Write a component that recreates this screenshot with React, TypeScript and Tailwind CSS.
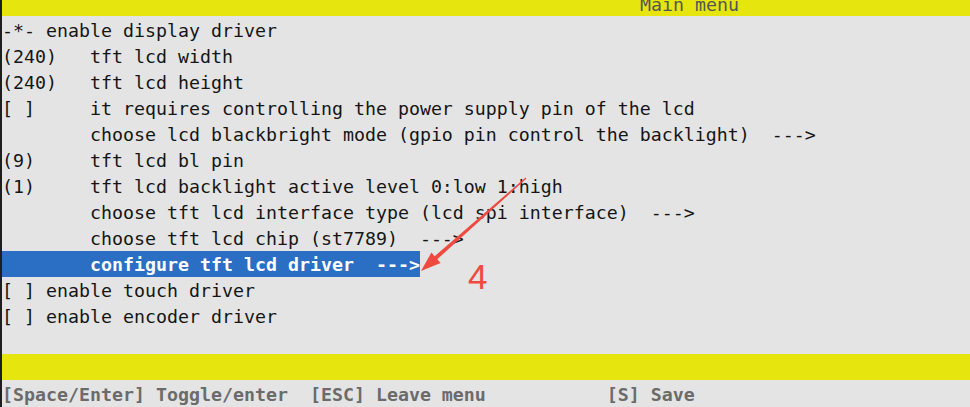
const rows: { text: string; selected?: boolean }[] = [
  { text: "-*- enable display driver" },
  { text: "(240)   tft lcd width" },
  { text: "(240)   tft lcd height" },
  { text: "[ ]     it requires controlling the power supply pin of the lcd" },
  { text: "        choose lcd blackbright mode (gpio pin control the backlight)  --->" },
  { text: "(9)     tft lcd bl pin" },
  { text: "(1)     tft lcd backlight active level 0:low 1:high" },
  { text: "        choose tft lcd interface type (lcd spi interface)  --->" },
  { text: "        choose tft lcd chip (st7789)  --->" },
  { text: "        configure tft lcd driver  --->", selected: true },
  { text: "[ ] enable touch driver" },
  { text: "[ ] enable encoder driver" },
];

const mono = "font-['DejaVu_Sans_Mono','Liberation_Mono',monospace] text-[18.27px]";

export default function App() {
  return (
    <div className="relative flex h-[407px] w-[970px] overflow-hidden bg-[#e4e4e4]">
      <div className="w-[2px] shrink-0 bg-[#1e1e1e]" />
      <div className={`flex min-w-0 flex-1 flex-col ${mono}`}>
        <div className="h-[16px] shrink-0 overflow-hidden bg-[#e6e60e]">
          <div className="mt-[-8px] whitespace-pre pl-[638px] leading-[26px] text-[#555555]">Main menu</div>
        </div>
        <div className="flex flex-col pt-[1px]">
          {rows.map((row) => (
            <div key={row.text} className="h-[26px] leading-[28px]">
              {row.selected ? (
                <span className="inline-block h-[26px] whitespace-pre bg-[#2a6fc4] font-bold text-white">{row.text}</span>
              ) : (
                <span className="whitespace-pre text-[#151515]">{row.text}</span>
              )}
            </div>
          ))}
        </div>
        <div className="mt-[25px] h-[26px] shrink-0 bg-[#e6e60e]" />
        <div className="h-[27px] whitespace-pre font-bold leading-[29px] text-[#6b6b6b]">
          {"[Space/Enter] Toggle/enter  [ESC] Leave menu           [S] Save"}
        </div>
      </div>

      {/* red annotation */}
      <svg className="pointer-events-none absolute left-0 top-0" width="970" height="407">
        <polygon
          points="526.5,178.5 437.3,259.2 440.6,263 421,271 431.4,252.5 434.7,256.2 525.5,177.5"
          fill="#ee4a3f"
        />
      </svg>
      <div className="absolute left-[468px] top-[258px] font-['Liberation_Sans',sans-serif] text-[35px] leading-[38px] text-[#ee4a3f]">
        4
      </div>
    </div>
  );
}
